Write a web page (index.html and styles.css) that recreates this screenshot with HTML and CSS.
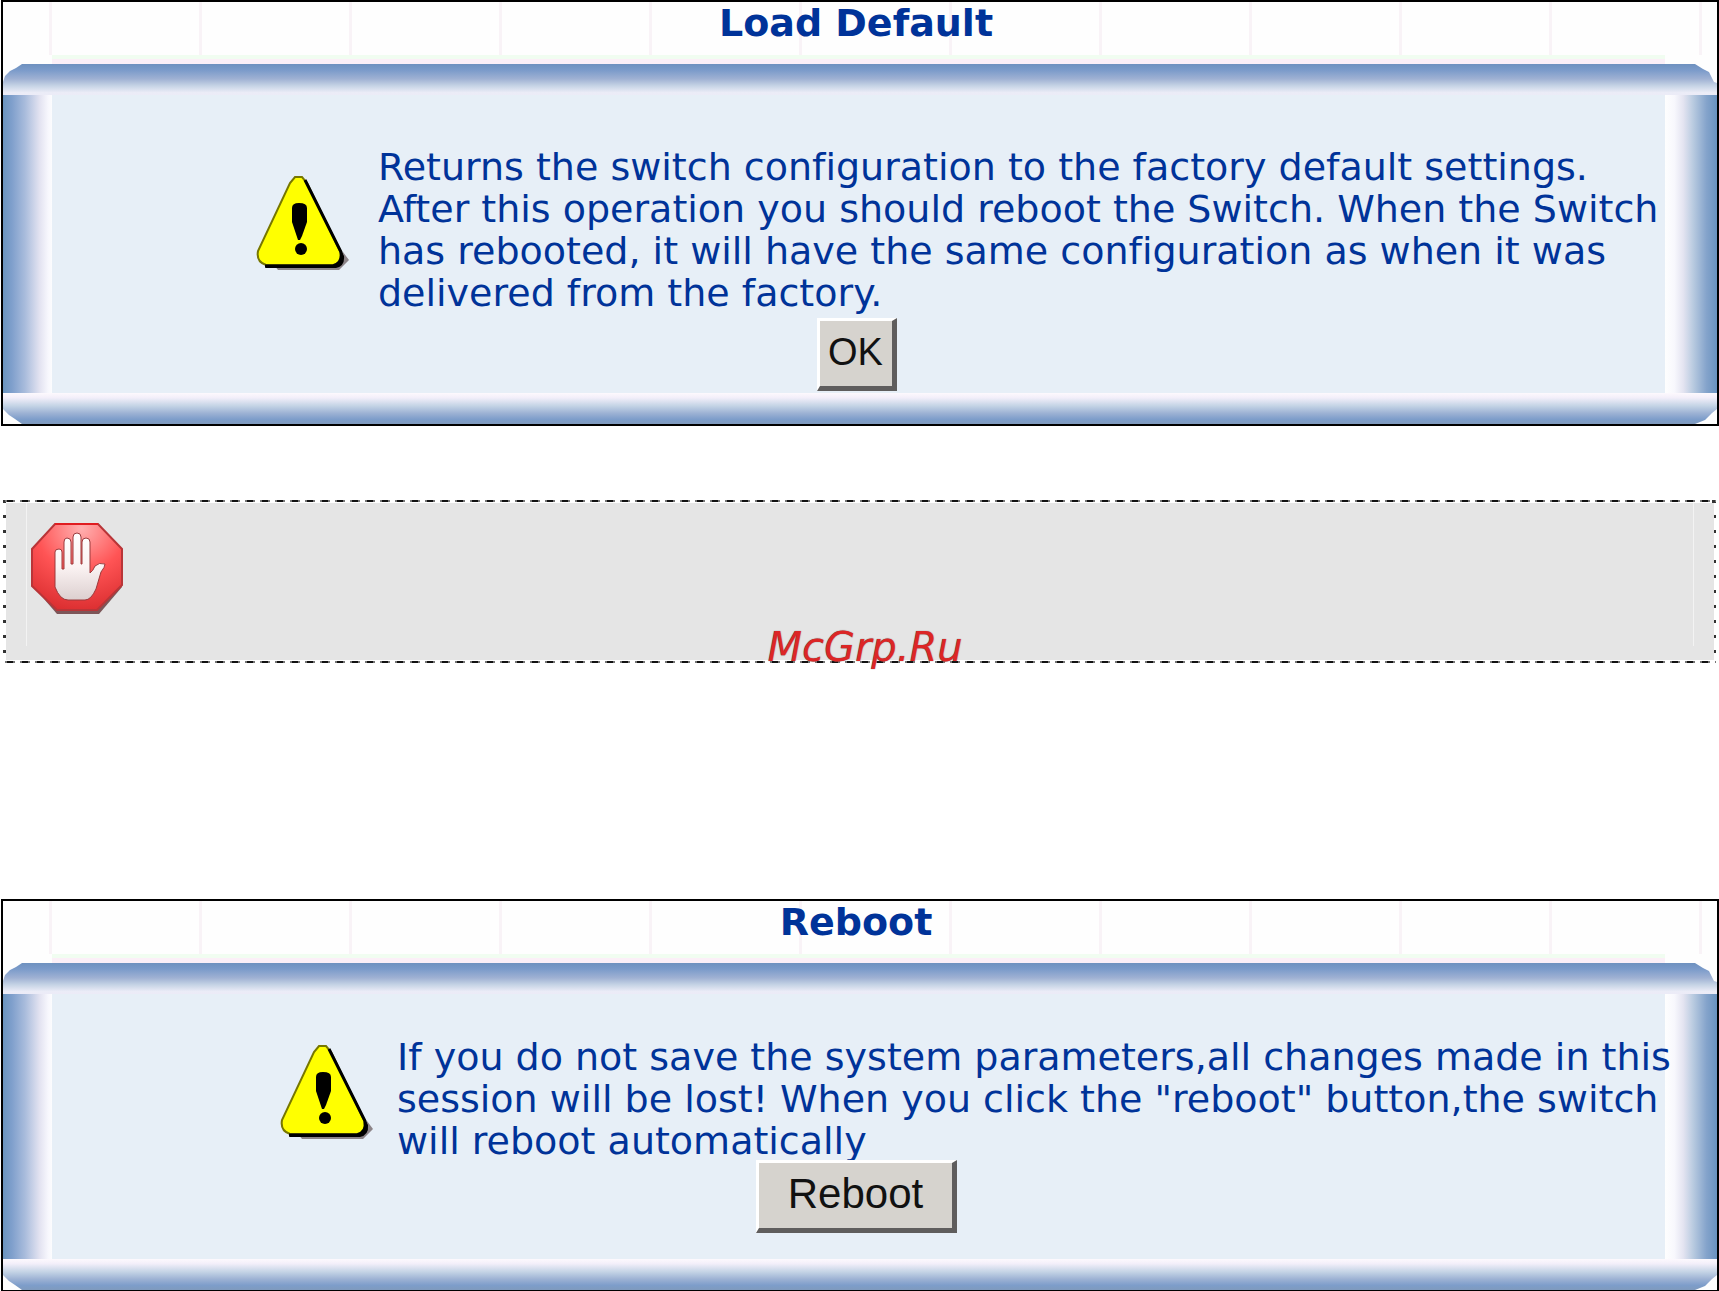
FILE: index.html
```html
<!DOCTYPE html>
<html lang="en">
<head>
<meta charset="utf-8">
<title>Load Default / Reboot</title>
<link rel="stylesheet" href="styles.css">
</head>
<body>
<svg class="defs" aria-hidden="true">
  <symbol id="warning" viewBox="0 0 94 94">
    <path d="M18 89 L22 94 H83 L93 84 L87 76 L80 88 Z" fill="#8c8488"/>
    <path d="M49 3 L88 80 Q89 90 80 92 H9 L14 86 H76 L84 80 Z" fill="#000"/>
    <path d="M39 1 H46 L51 7 L84 75 Q87 88 77 89 H10 Q0 86 2 75 L34 7 Z" fill="#ff0" stroke="#777700" stroke-width="2"/>
    <path d="M49 4 L85 76 Q87 87 77 90 H9" fill="none" stroke="#000" stroke-width="3"/>
    <path d="M36 32 Q36 27 43 27 Q51 27 51 32 V46 L46 60 L44 64 H42 L40 58 L36 46 Z" fill="#000"/>
    <circle cx="45" cy="73" r="6" fill="#000"/>
  </symbol>
</svg>

<main class="page">
  <section class="panel">
    <h2 class="panel-title">Load Default</h2>
    <div class="frame">
      <div class="band band-top"></div>
      <div class="side side-left"></div>
      <div class="side side-right"></div>
      <div class="content content-default">
        <div class="message">
          <svg class="warning" role="img" aria-label="Warning"><use href="#warning"/></svg>
          <p class="text">Returns the switch configuration to the factory default settings.<br>After this operation you should reboot the Switch. When the Switch<br>has rebooted, it will have the same configuration as when it was<br>delivered from the factory.</p>
        </div>
        <button class="button" type="button">OK</button>
      </div>
      <div class="band band-bottom"></div>
    </div>
  </section>

  <aside class="notice">
    <div class="notice-body">
      <svg class="stop" viewBox="0 0 92 92" role="img" aria-label="Stop">
        <defs>
          <radialGradient id="red" cx="0.55" cy="0.05" r="1">
            <stop offset="0" stop-color="#ffb0b0"/>
            <stop offset="0.5" stop-color="#ff5455"/>
            <stop offset="1" stop-color="#d92c2e"/>
          </radialGradient>
          <linearGradient id="palm" x1="0" y1="0" x2="0" y2="1">
            <stop offset="0" stop-color="#fff"/>
            <stop offset="0.5" stop-color="#fbf3f3"/>
            <stop offset="1" stop-color="#dccfcf"/>
          </linearGradient>
        </defs>
        <path d="M1 62 L26 91 H68 L91 64 V56 Z" fill="#7d5658"/>
        <path d="M24 1 H67 L91 26 V62 L66 87 H26 L1 63 V26 Z" fill="url(#red)" stroke="#b93538" stroke-width="2"/>
        <path d="M24 1 H67" stroke="#e01c20" stroke-width="2"/>
        <path d="M24 64 V29 Q24 26 28 26 Q31 26 31 29 V46 H33 V19 Q33 15 36 15 Q40 15 40 19 V41 H42 V14 Q42 10 46 10 Q50 10 50 14 V41 H51 V19 Q51 15 55 15 Q59 15 59 19 V50 Q62 48 64 43 Q68 39 74 41 Q74 44 70 49 L65 66 Q60 77 54 77 H37 Q29 77 24 64 Z" fill="url(#palm)" stroke="#9c3b3d" stroke-width="1"/>
      </svg>
      <span class="watermark">McGrp.Ru</span>
    </div>
  </aside>

  <section class="panel">
    <h2 class="panel-title">Reboot</h2>
    <div class="frame">
      <div class="band band-top"></div>
      <div class="side side-left"></div>
      <div class="side side-right"></div>
      <div class="content content-reboot">
        <div class="message">
          <svg class="warning" role="img" aria-label="Warning"><use href="#warning"/></svg>
          <p class="text">If you do not save the system parameters,all changes made in this<br>session will be lost! When you click the "reboot" button,the switch<br>will reboot automatically</p>
        </div>
        <button class="button button-wide" type="button">Reboot</button>
      </div>
      <div class="band band-bottom"></div>
    </div>
  </section>
</main>
</body>
</html>
```

FILE: styles.css
```css
* {
  box-sizing: border-box;
}

body {
  margin: 0;
  background: #fff;
  font-family: "DejaVu Sans", Verdana, sans-serif;
  font-variant-ligatures: none;
}

.defs {
  display: none;
}

.page {
  display: flex;
  flex-direction: column;
}

.panel {
  margin-left: 1px;
  border: 2px solid #000;
  background: #fefefe;
  overflow: hidden;
}

.panel-title {
  height: 53px;
  margin: 0;
  padding-right: 8px;
  color: #039;
  font-size: 38px;
  line-height: 42px;
  font-weight: bold;
  text-align: center;
  background: repeating-linear-gradient(to right, transparent 0 46px, #f9f3f7 46px 49px, transparent 49px 150px);
}

.frame {
  display: grid;
  grid-template-columns: 49px minmax(0, 1fr) 52px;
  grid-template-rows: auto auto 31px;
}

.band {
  grid-column: 1 / -1;
}

.band-top {
  height: 40px;
  padding-top: 9px;
  background: linear-gradient(#f1fdf1 0 4px, #fbeff7 4px 9px, transparent 9px) 49px 0 / calc(100% - 101px) 100% no-repeat;
}

.band-top::before {
  content: "";
  display: block;
  height: 31px;
  background: linear-gradient(#6e91bf, #7b9bca 20%, #9fb1d3 48%, #c5d3e5 70%, #ebecf7 92%, #ecebf7);
  clip-path: polygon(0 18px, 2px 12px, 7px 7px, 13px 4px, 19px 0, calc(100% - 22px) 0, calc(100% - 14px) 5px, calc(100% - 8px) 8px, calc(100% - 3px) 18px, 100% 19px, 100% 100%, 0 100%);
}

.band-bottom {
  grid-row: 3;
  background: linear-gradient(#fdf9fd, #f3effa 15%, #c3d3e5 42%, #9db2d4 65%, #7d9dca 85%, #7f9abd);
  clip-path: polygon(0 0, 100% 0, 100% 16px, calc(100% - 5px) 20px, calc(100% - 12px) 27px, calc(100% - 22px) 31px, 19px 31px, 12px 26px, 6px 22px, 0 16px);
}

.side {
  grid-row: 2;
}

.side-left {
  grid-column: 1;
  background: linear-gradient(to right, #6b95bf, #7f9fcc 18%, #a9bcdc 45%, #e3e3f1 75%, #f7f7fd 92%, #fcfcfe);
}

.side-right {
  grid-column: 3;
  background: linear-gradient(to left, #6a93bf, #84a3cb 20%, #b9cbe0 46%, #e4e4f1 65%, #f8f8fd 82%, #fefefe);
}

.content {
  grid-row: 2;
  grid-column: 2;
  display: flex;
  flex-direction: column;
  align-items: center;
  background: #e7eff7;
}

.content-default {
  padding: 51px 0 2px 204px;
}

.content-reboot {
  padding: 42px 0 26px 228px;
}

.message {
  align-self: stretch;
  display: flex;
  align-items: center;
  gap: 28px;
}

.content-reboot .message {
  gap: 23px;
}

.warning {
  flex: none;
  width: 94px;
  height: 94px;
  margin-bottom: 14px;
}

.text {
  margin: 0;
  color: #039;
  font-size: 38px;
  line-height: 42px;
  white-space: nowrap;
}

.button {
  min-width: 80px;
  height: 73px;
  margin-top: 4px;
  padding: 0 0 3px;
  border: solid;
  border-width: 3px 5px 5px 3px;
  border-color: #fff #5f5d5d #5f5d5d #fff;
  background: #d6d3ce;
  color: #111;
  font-family: "Liberation Sans", Arial, sans-serif;
  font-size: 38px;
  line-height: 60px;
}

.content-default .button {
  margin-left: -208px;
}

.content-reboot .button {
  margin-top: -2px;
  margin-left: -232px;
}

.button-wide {
  min-width: 201px;
  font-size: 42px;
}

.notice {
  margin: 73px 3px 236px 3px;
  padding: 4px 2px 3px 3px;
  background:
    repeating-linear-gradient(to right, #777 0 2px, #111 2px 8px, #777 8px 10px, transparent 10px 15px) 2px 1px / 100% 2px no-repeat,
    repeating-linear-gradient(to right, #777 0 2px, #111 2px 8px, #777 8px 10px, transparent 10px 15px) 2px 100% / 100% 2px no-repeat,
    repeating-linear-gradient(to bottom, #333 0 3px, transparent 3px 15px) 0 1px / 3px 100% no-repeat,
    repeating-linear-gradient(to bottom, #333 0 3px, transparent 3px 15px) 100% 1px / 4px 100% no-repeat;
}

.notice-body {
  position: relative;
  height: 157px;
  padding: 20px 25px;
  background:
    linear-gradient(#f3f3f3, #f3f3f3) 20px 0 / 1px 143px no-repeat,
    linear-gradient(#f3f3f3, #f3f3f3) calc(100% - 20px) 0 / 1px 143px no-repeat,
    #e5e5e5;
}

.stop {
  display: block;
  width: 92px;
  height: 92px;
}

.watermark {
  position: absolute;
  left: 0;
  right: 0;
  bottom: -11px;
  padding-left: 10px;
  color: #dc2626;
  font-size: 40px;
  line-height: 48px;
  font-style: italic;
  text-align: center;
  text-shadow: 0 0 1px #555;
}
```
